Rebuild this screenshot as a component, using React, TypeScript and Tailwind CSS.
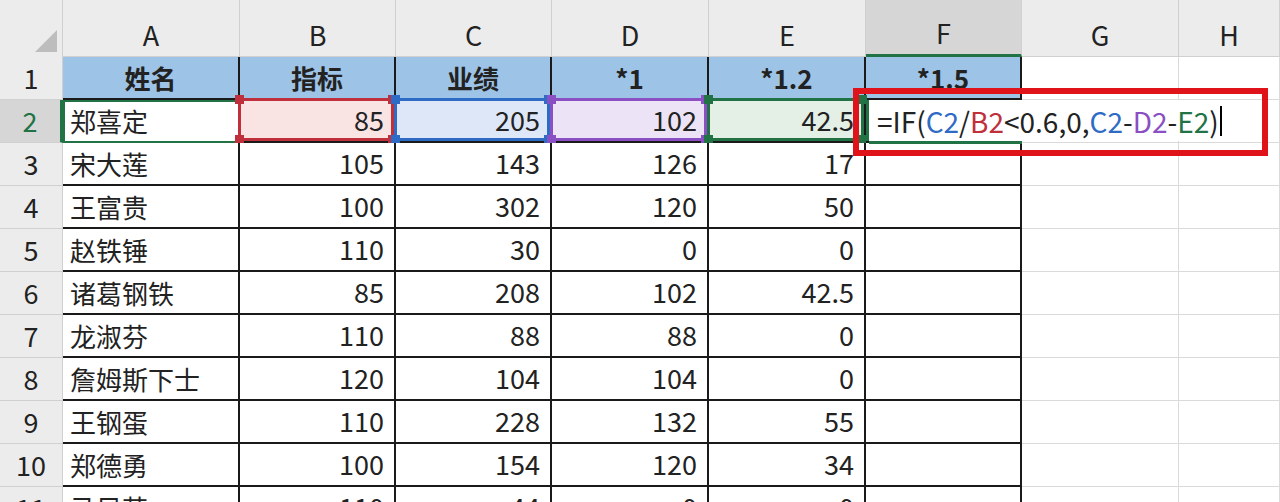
const cols = [
  { k: 'A', w: 177 },
  { k: 'B', w: 156 },
  { k: 'C', w: 156 },
  { k: 'D', w: 157 },
  { k: 'E', w: 157 },
  { k: 'F', w: 156 },
  { k: 'G', w: 157 },
  { k: 'H', w: 101 },
]

const data: (string | number)[][] = [
  ['郑喜定', 85, 205, 102, 42.5],
  ['宋大莲', 105, 143, 126, 17],
  ['王富贵', 100, 302, 120, 50],
  ['赵铁锤', 110, 30, 0, 0],
  ['诸葛钢铁', 85, 208, 102, 42.5],
  ['龙淑芬', 110, 88, 88, 0],
  ['詹姆斯下士', 120, 104, 104, 0],
  ['王钢蛋', 110, 228, 132, 55],
  ['郑德勇', 100, 154, 120, 34],
  ['马风芸', 110, 44, 0, 0],
]

const hl: Record<number, { b: string; bg: string }> = {
  1: { b: '#c0303c', bg: '#f9e3e3' },
  2: { b: '#2e6bc4', bg: '#dde7f7' },
  3: { b: '#8a4fc2', bg: '#ece4f6' },
  4: { b: '#217346', bg: '#e4efe6' },
}

function Handle({ c, pos }: { c: string; pos: string }) {
  return <span className={`absolute w-[9px] h-[9px] ${pos}`} style={{ background: c }} />
}

export default function App() {
  const font = { fontFamily: '"Noto Sans CJK SC", "Open Sans", sans-serif' }
  return (
    <div className="w-[1280px] h-[502px] overflow-hidden bg-white relative text-[#222]" style={font}>
      {/* column headers */}
      <div className="flex h-[57px] bg-[#ececec]">
        <div className="w-[63px] relative border-r border-[#d0d0d0]">
          <div className="absolute right-[5px] bottom-[5px] w-0 h-0 border-l-[22px] border-l-transparent border-b-[22px] border-b-[#bdbdbd]" />
        </div>
        {cols.map((c) => (
          <div
            key={c.k}
            style={{ width: c.w }}
            className={`flex items-end justify-center pb-[1px] text-[27px] border-r border-[#d0d0d0] ${c.k === 'F' ? 'bg-[#d6d6d6] border-b-[3px] border-b-[#217346]' : 'border-b border-b-[#d0d0d0]'}`}
          >
            {c.k}
          </div>
        ))}
      </div>
      {/* rows */}
      {Array.from({ length: 11 }).map((_, r) => {
        const row = r + 1
        return (
          <div key={row} className="flex h-[43px]">
            <div className={`w-[63px] shrink-0 flex items-center justify-center text-[27px] border-r border-b border-[#d0d0d0] ${row === 2 ? 'bg-[#d6d6d6] text-[#217346] border-r-[3px] border-r-[#217346]' : 'bg-[#ececec]'}`}>
              {row}
            </div>
            {cols.map((c, ci) => {
              const inTable = ci <= 5
              let content: any = ''
              let bg = 'white'
              let cls = 'text-[27px]'
              if (row === 1 && inTable) {
                content = ['姓名', '指标', '业绩', '*1', '*1.2', '*1.5'][ci]
                bg = '#9dc3e6'
                cls = 'justify-center font-bold text-[26px]'
              } else if (row >= 2 && inTable && ci <= 4) {
                content = data[row - 2][ci]
                cls = ci === 0 ? 'justify-start pl-[7px] text-[26px]' : 'justify-end pr-[10px] text-[27px]'
                if (row === 2 && hl[ci]) bg = hl[ci].bg
              }
              const h = row === 2 ? hl[ci] : undefined
              return (
                <div
                  key={c.k}
                  style={{ width: c.w, background: bg }}
                  className={`relative shrink-0 flex items-center ${cls} ${inTable ? 'border-r-2 border-b-2 border-[#1a1a1a]' : 'border-r border-b border-[#dadada]'} ${row === 2 && ci === 0 ? 'outline-2 outline-[#217346] -outline-offset-2' : ''}`}
                >
                  {content}
                  {h && (
                    <div className="absolute -left-[2px] -top-[2px] right-0 bottom-0 border-[3px]" style={{ borderColor: h.b }}>
                      <Handle c={h.b} pos="-left-[6px] -top-[6px]" />
                      <Handle c={h.b} pos="-right-[6px] -top-[6px]" />
                      <Handle c={h.b} pos="-left-[6px] -bottom-[6px]" />
                      <Handle c={h.b} pos="-right-[6px] -bottom-[6px]" />
                    </div>
                  )}
                  {row === 2 && c.k === 'F' && (
                    <div className="absolute left-0 top-0 h-[41px] w-[390px] bg-white z-10 flex items-center pl-[8px] text-[28px] whitespace-nowrap border-l-[3px] border-[#217346]">
                      <span>=IF(</span>
                      <span className="text-[#2e6bc4]">C2</span>
                      <span>/</span>
                      <span className="text-[#c0303c]">B2</span>
                      <span>&lt;0.6,0,</span>
                      <span className="text-[#2e6bc4]">C2</span>
                      <span>-</span>
                      <span className="text-[#8a4fc2]">D2</span>
                      <span>-</span>
                      <span className="text-[#217346]">E2</span>
                      <span>)</span>
                      <span className="w-[2px] h-[30px] bg-black ml-[1px]" />
                      <span className="absolute left-0 bottom-[-3px] w-[153px] h-[3px] bg-[#217346]" />
                    </div>
                  )}
                </div>
              )
            })}
          </div>
        )
      })}
      {/* red annotation box */}
      <div className="absolute left-[853px] top-[88px] w-[415px] h-[68px] border-[6px] border-[#e0131b] z-20 pointer-events-none" />
    </div>
  )
}
